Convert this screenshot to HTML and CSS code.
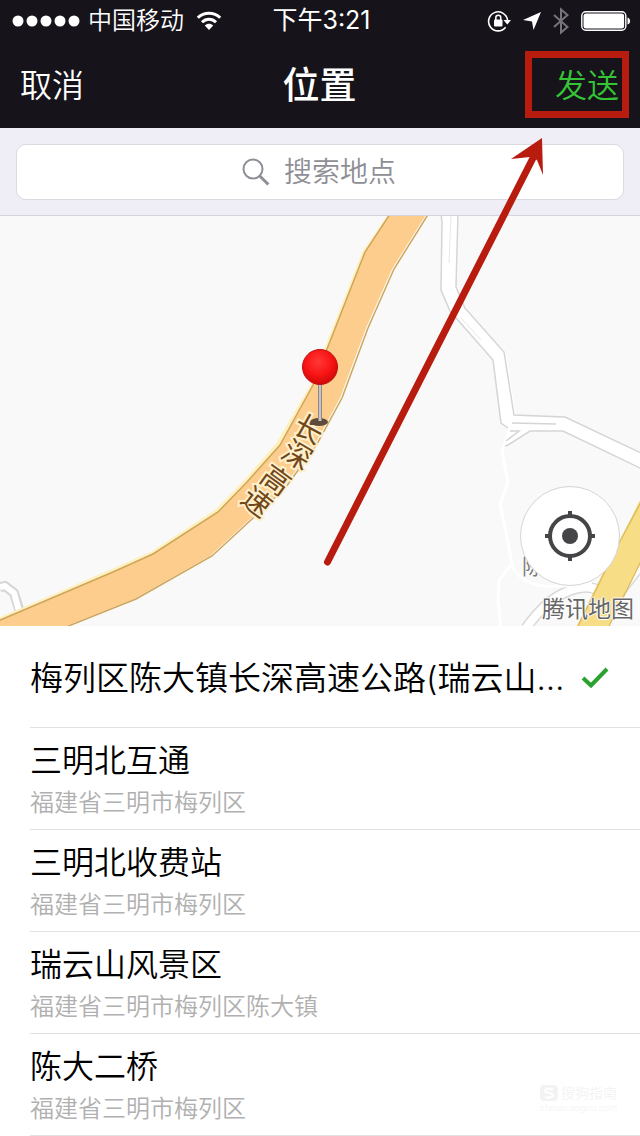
FILE: index.html
```html
<!DOCTYPE html>
<html lang="zh-CN">
<head>
<meta charset="utf-8">
<meta name="viewport" content="width=device-width, initial-scale=1">
<title>位置</title>
<link rel="stylesheet" href="styles.css">
</head>
<body>
<div class="app">
  <header class="top">
    <div class="status">
      <div class="status-left">
        <svg class="icon" width="68" height="12" viewBox="0 0 68 12" fill="#fff" aria-hidden="true">
          <circle cx="6" cy="6" r="5.5"/><circle cx="20" cy="6" r="5.5"/><circle cx="34" cy="6" r="5.5"/><circle cx="48" cy="6" r="5.5"/><circle cx="62" cy="6" r="5.5"/>
        </svg>
        <span>中国移动</span>
        <svg class="icon wifi" width="26" height="20" viewBox="0 0 26 20" fill="none" stroke="#fff" aria-hidden="true">
          <path d="M1.8 6.8C8 .6 18 .6 24.200 6.800" stroke-width="3"/>
          <path d="M6 11.200c4-4 10-4 14 0" stroke-width="3"/>
          <path d="M8.800 14.600c2.400-2.400 6-2.400 8.400 0L13 19z" fill="#fff" stroke="none"/>
        </svg>
      </div>
      <time class="clock">下午3:21</time>
      <div class="status-right">
        <svg class="icon" width="24" height="24" viewBox="0 0 24 24" fill="none" stroke="#fff" aria-hidden="true">
          <path d="M18.600 18.200A9.500 9.500 0 1 1 20.500 11" stroke-width="1.600"/>
          <path d="M16.500 11h7.500l-3.700 4.500z" fill="#fff" stroke="none"/>
          <rect x="7" y="10.500" width="8.500" height="7" rx="1" fill="#fff" stroke="none"/>
          <path d="M8.800 11V8.700a2.500 2.500 0 0 1 5 0V11" stroke-width="1.500"/>
        </svg>
        <svg class="icon" width="18" height="18" viewBox="0 0 18 18" fill="#fff" aria-hidden="true"><path d="M18 0 10.500 18 9 9.500 0 8z"/></svg>
        <svg class="icon" width="16" height="28" viewBox="0 0 16 28" fill="none" stroke="#77757b" stroke-width="2" aria-hidden="true"><path d="m1 8 13.500 12L8 25.500v-23L14.500 8 1 20"/></svg>
        <svg class="icon" width="50" height="20" viewBox="0 0 50 20" aria-hidden="true">
          <rect x=".8" y=".8" width="44" height="18.400" rx="4" fill="none" stroke="#fff" stroke-width="1.400"/>
          <rect x="2.500" y="2.500" width="40.600" height="15" rx="2.500" fill="#fff"/>
          <path d="M46.500 6.500c3.500 1 3.500 6 0 7z" fill="#fff"/>
        </svg>
      </div>
    </div>
    <nav class="nav">
      <button class="nav-btn" type="button">取消</button>
      <h1 class="title">位置</h1>
      <button class="nav-btn send" type="button">发送</button>
    </nav>
  </header>

  <div class="search-bar">
    <label class="search">
      <svg class="icon" width="28" height="28" viewBox="0 0 28 28" fill="none" stroke="#8e8e96" aria-label="搜索">
        <circle cx="11" cy="11" r="9.500" stroke-width="2"/><path d="m17.800 18 8.500 8.500" stroke-width="3"/>
      </svg>
      <input class="search-input" type="text" placeholder="搜索地点" aria-label="搜索地点">
    </label>
  </div>

  <main>
    <section class="map" aria-label="地图">
      <svg class="map-art" viewBox="0 216 640 410">
        <defs>
          <radialGradient id="ball" cx=".45" cy=".35" r=".65">
            <stop offset="0" stop-color="#ff3838"/><stop offset=".6" stop-color="#f81414"/><stop offset="1" stop-color="#cf0808"/>
          </radialGradient>
        </defs>
        <rect y="216" width="640" height="410" fill="#f9f9f9"/>
        <g fill="none" stroke-linejoin="round">
          <path d="M526 628q18-25 36-34 18-9 30-6t18 6l10-2 20-26" stroke="#d9d9d9" stroke-width="11"/>
          <path d="M526 628q18-25 36-34 18-9 30-6t18 6l10-2 20-26" stroke="#fff" stroke-width="8"/>
          <path d="M506 440l-4 12 6 30-8 22 8 38 4 22-13 16-1 20 3 28M512 566q10 18 32 20 24 1 48-3" stroke="#fff" stroke-width="3"/>
          <path d="M0 587l5-1 9 7 7 22" stroke="#d6d6d6" stroke-width="10"/>
          <path d="M0 587l5-1 9 7 7 25" stroke="#fff" stroke-width="6"/>
        </g>
        <path d="M441 214l1 8-1 68 9 21 43 49 8 63 7 5-4 15 4 3 22-15h33l79 38v-16l-75-35-51-2-10-63-40-46-9-20 2-73z" fill="#fff"/>
        <g fill="none" stroke="#d5d5d5" stroke-width="1.500">
          <path d="M441 214l1 8-1 68 9 21 43 49 8 63 7 5M505 446l3-1 22-14h33l79 38M458 214l-2 73 9 21 39 44 10 63 51 2 76 36M512 423l44 1M510 431h9l-13 10"/>
          <path d="M451 216l-2 47M461 318l20 22" stroke="#e8e8e8" stroke-width="1"/>
        </g>
        <path d="M640 500v61l-32 65h-31l25-51 17-32z" fill="#f8dd87"/>
        <path d="M642 500l-23 43-42 85M642 559l-34 69" fill="none" stroke="#dfbd58" stroke-width="1.500"/>
        <path d="M390 215l-26 38-38 97-14 36-34 58-32 37-29 30-64 42-101 44-54 23" fill="none" stroke="#fff0bd" stroke-width="4"/>
        <path d="M390 214l-25 38-38 97-14 36-33 60-33 37-29 30-65 42-40 18-61 26-54 23v6h66l70-28 76-43 39-36 35-33 31-43 25-46 26-70 26-59 35-56z" fill="#fccd8c"/>
        <path d="M390 214l-25 38-38 97-14 36-33 60-33 37-29 30-65 42-40 18-61 26-54 23M66 627l70-28 76-43 39-36 35-33 31-43 25-46 26-70 26-59 35-56" fill="none" stroke="#cda65b" stroke-width="1.500"/>
        <g class="road-name">
          <text transform="translate(309 429) rotate(29)">长</text>
          <text transform="translate(297 455) rotate(31)">深</text>
          <text transform="translate(276 480) rotate(36)">高</text>
          <text transform="translate(257 502) rotate(38)">速</text>
        </g>
        <ellipse cx="319" cy="422" rx="9" ry="4" fill="#5d4c3b"/>
        <path d="M320 382v39" stroke="#8f8888" stroke-width="4"/>
        <path d="M320 382v39" stroke="#c9c4c4" stroke-width="2"/>
        <circle cx="320" cy="367" r="17.500" fill="url(#ball)" stroke="#bd1111"/>
        <text class="place-name" x="522" y="574">陈大</text>
      </svg>
      <button class="locate" type="button" aria-label="定位">
        <svg class="icon" width="52" height="52" viewBox="0 0 52 52" fill="none" stroke="#454547" aria-hidden="true">
          <circle cx="26" cy="26" r="20" stroke-width="4"/><circle cx="26" cy="26" r="8" fill="#454547" stroke="none"/>
          <path d="M26 1v5M26 46v5M1 26h5M46 26h5" stroke-width="4"/>
        </svg>
      </button>
      <span class="map-brand">腾讯地图</span>
    </section>

    <ul class="places">
      <li><button class="place current" type="button">
        <span class="name">梅列区陈大镇长深高速公路(瑞云山…</span>
        <svg class="icon" width="28" height="22" viewBox="0 0 28 22" fill="none" stroke="#2ba12f" stroke-width="4" aria-label="已选择"><path d="m2 11 8 7.500L26 2"/></svg>
      </button></li>
      <li><button class="place" type="button"><span class="name">三明北互通</span><span class="addr">福建省三明市梅列区</span></button></li>
      <li><button class="place" type="button"><span class="name">三明北收费站</span><span class="addr">福建省三明市梅列区</span></button></li>
      <li><button class="place" type="button"><span class="name">瑞云山风景区</span><span class="addr">福建省三明市梅列区陈大镇</span></button></li>
      <li><button class="place" type="button"><span class="name">陈大二桥</span><span class="addr">福建省三明市梅列区</span></button></li>
    </ul>
  </main>

  <svg class="callout" width="640" height="640" viewBox="0 0 640 640" aria-hidden="true">
    <rect x="528.500" y="54.500" width="97" height="60" fill="none" stroke="#b81c0e" stroke-width="7"/>
    <path d="M327.500 562 533 158" stroke="#b81c0e" stroke-width="7" stroke-linecap="round"/>
    <path d="M542 138 511 159l19-2 7 3 6 15z" fill="#b81c0e"/>
  </svg>
  <div class="watermark">
    <svg class="icon" width="18" height="16" viewBox="0 0 18 16" aria-hidden="true"><rect width="18" height="16" rx="4" fill="#f3f3f3"/><path d="M13 4.500Q9 2.500 6 4.500T9 8t3 3.500-7 .5" fill="none" stroke="#fff" stroke-width="2"/></svg>
    <span>搜狗指南</span>
    <small>zhinan.sogou.com</small>
  </div>
</div>
</body>
</html>
```

FILE: styles.css
```css
* { box-sizing: border-box; }

body {
  margin: 0;
  background: #fff;
  color: #000;
  font-family: Inter, "Noto Sans CJK SC", sans-serif;
  font-weight: 350;
}

button {
  margin: 0;
  padding: 0;
  border: 0;
  background: none;
  color: inherit;
  font: inherit;
}

.icon { display: block; flex: none; }

.app { position: relative; overflow: hidden; }

.top { background: #16131a; color: #fff; }

.status {
  display: grid;
  grid-template-columns: 1fr auto 1fr;
  align-items: center;
  height: 40px;
  padding: 1px 9px 0 12px;
  font-size: 24px;
  line-height: 39px;
}

.status-left, .status-right { display: flex; align-items: center; }
.status-left { gap: 8px; }
.status-right { justify-content: flex-end; gap: 12px; }
.wifi { margin-left: 4px; }
.clock { font-size: 25px; font-weight: 400; }

.nav {
  display: grid;
  grid-template-columns: 1fr auto 1fr;
  align-items: center;
  height: 88px;
  padding: 4px 21px 0 20px;
}

.nav-btn { justify-self: start; font-size: 32px; line-height: 48px; }
.send { justify-self: end; color: #35c435; }
.title { margin: 0; font-size: 37px; font-weight: 500; line-height: 48px; }

.search-bar {
  padding: 16px 16px 15px;
  background: #efeef7;
  border-bottom: 1px solid #d5d4dc;
}

.search {
  display: flex;
  align-items: center;
  justify-content: center;
  gap: 14px;
  height: 56px;
  border: 1px solid #dbdae1;
  border-radius: 10px;
  background: #fff;
}

.search-input {
  width: 114px;
  height: 44px;
  padding: 0;
  border: 0;
  outline: 0;
  background: none;
  font: inherit;
  font-size: 28px;
}
.search-input::placeholder { color: #8e8e96; opacity: 1; }

.map { position: relative; overflow: hidden; }
.map-art { display: block; width: 100%; height: auto; }

.road-name {
  fill: #704719;
  stroke: #fff0cc;
  stroke-width: 4px;
  paint-order: stroke;
  font-size: 29px;
  font-weight: 400;
  text-anchor: middle;
  dominant-baseline: central;
}
.place-name { fill: #777; font-size: 22px; }

.locate {
  position: absolute;
  right: 20px;
  bottom: 40px;
  display: grid;
  place-items: center;
  width: 100px;
  height: 100px;
  border: 1px solid #d4d4d4;
  border-radius: 50%;
  background: #fff;
}

.map-brand {
  position: absolute;
  right: 6px;
  bottom: 0;
  color: #666;
  font-size: 23px;
  font-weight: 400;
  line-height: 34px;
  text-shadow: 1px 0 #fff, -1px 0 #fff, 0 1px #fff, 0 -1px #fff;
}

.places { margin: 0; padding: 0 0 0 30px; list-style: none; }

.place {
  display: flex;
  flex-direction: column;
  gap: 6px;
  width: 100%;
  min-height: 102px;
  padding: 13px 0 10px;
  border-bottom: 1px solid #e2e2e2;
  font-size: 32px;
  text-align: left;
}
.place.current {
  flex-direction: row;
  align-items: center;
  justify-content: space-between;
  padding-right: 31px;
  font-size: 33px;
}

.name {
  overflow: hidden;
  line-height: 40px;
  white-space: nowrap;
}
.addr { color: #b0b0b0; font-size: 24px; line-height: 32px; }

.callout {
  position: absolute;
  top: 0;
  right: 0;
  pointer-events: none;
}

.watermark {
  position: absolute;
  right: 23px;
  bottom: 22px;
  display: grid;
  grid-template-columns: auto auto;
  align-items: center;
  column-gap: 3px;
  color: #f3f3f3;
  font-size: 14px;
  line-height: 18px;
}
.watermark small { grid-column: 1 / -1; font-size: 9px; line-height: 12px; }
```
